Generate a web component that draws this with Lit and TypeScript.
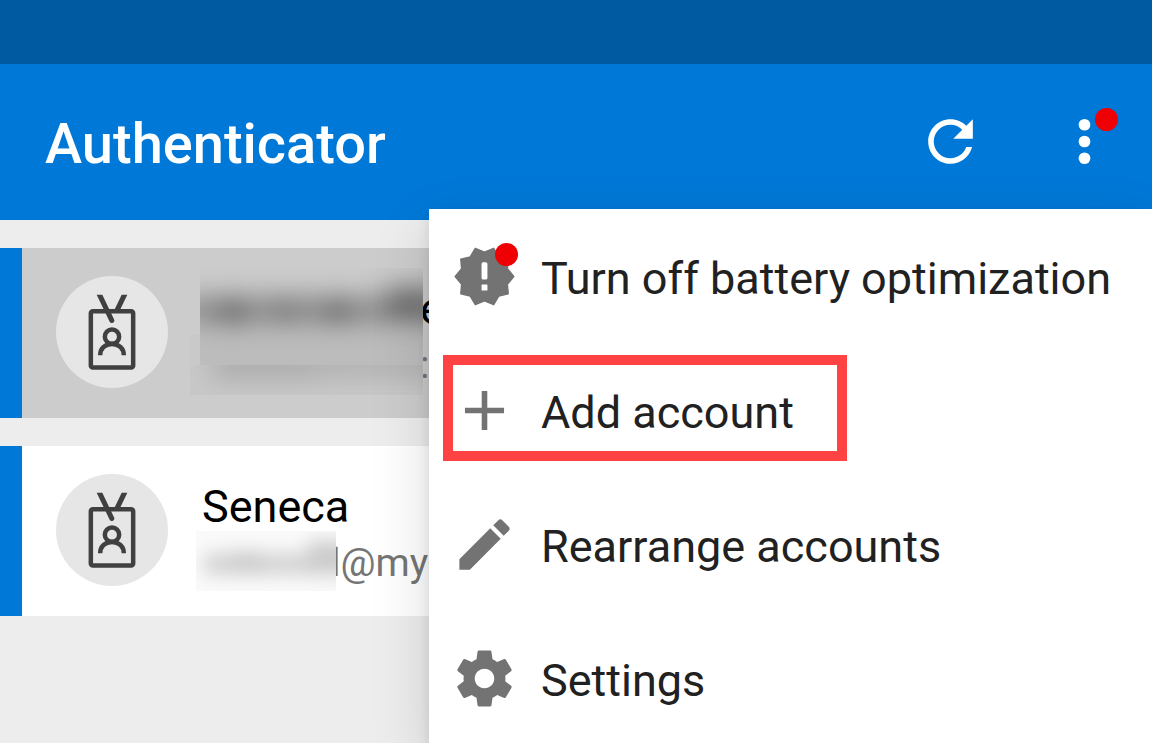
import { LitElement, html, css, svg } from "lit";
import { customElement, property } from "lit/decorators.js";
import { classMap } from "lit/directives/class-map.js";

const ICONS = {
  refresh: svg`<path d="M17.65 6.35C16.2 4.9 14.21 4 12 4c-4.42 0-7.99 3.58-7.99 8s3.57 8 7.99 8c3.73 0 6.84-2.55 7.73-6h-2.08c-.82 2.33-3.04 4-5.65 4-3.31 0-6-2.69-6-6s2.69-6 6-6c1.66 0 3.14.69 4.22 1.78L13 11h7V4l-2.35 2.35z"/>`,
  more: svg`<circle cx="12" cy="6" r="2.1"/><circle cx="12" cy="12" r="2.1"/><circle cx="12" cy="18" r="2.1"/>`,
  alert: svg`<path stroke="currentColor" stroke-width=".5" stroke-linejoin="round" d="M22.5 12l-2.3-2.8.3-3.4-3.4-.85L15.3 1.9 12 3.25 8.7 1.9 6.9 4.95l-3.4.85.3 3.4L1.5 12l2.3 2.8-.3 3.4 3.4.85L8.7 22.1 12 20.75l3.3 1.35 1.8-3.05 3.4-.85-.3-3.4z"/><rect x="10.95" y="6.9" width="2.1" height="6.2" rx=".6" fill="#fff"/><rect x="10.95" y="14.9" width="2.1" height="2.1" rx=".2" fill="#fff"/>`,
  plus: svg`<path d="M19 13h-6v6h-2v-6H5v-2h6V5h2v6h6v2z"/>`,
  pencil: svg`<path d="M3 17.25V21h3.75L17.81 9.94l-3.75-3.75L3 17.25zM20.71 7.04c.39-.39.39-1.02 0-1.41l-2.34-2.34c-.39-.39-1.02-.39-1.41 0l-1.83 1.83 3.75 3.75 1.83-1.83z"/>`,
  gear: svg`<path d="M19.43 12.98c.04-.32.07-.64.07-.98s-.03-.66-.07-.98l2.11-1.65c.19-.15.24-.42.12-.64l-2-3.46c-.12-.22-.39-.3-.61-.22l-2.49 1c-.52-.4-1.08-.73-1.69-.98l-.38-2.65C14.46 2.18 14.25 2 14 2h-4c-.25 0-.46.18-.49.42l-.38 2.65c-.61.25-1.17.59-1.69.98l-2.49-1c-.23-.09-.49 0-.61.22l-2 3.46c-.13.22-.07.49.12.64l2.11 1.65c-.04.32-.07.65-.07.98s.03.66.07.98l-2.11 1.65c-.19.15-.24.42-.12.64l2 3.46c.12.22.39.3.61.22l2.49-1c.52.4 1.08.73 1.69.98l.38 2.65c.03.24.24.42.49.42h4c.25 0 .46-.18.49-.42l.38-2.65c.61-.25 1.17-.59 1.69-.98l2.49 1c.23.09.49 0 .61-.22l2-3.46c.12-.22.07-.49-.12-.64l-2.11-1.65zM12 15.5c-1.93 0-3.5-1.57-3.5-3.5s1.57-3.5 3.5-3.5 3.5 1.57 3.5 3.5-1.57 3.5-3.5 3.5z"/>`,
};

type IconName = keyof typeof ICONS;

@customElement("app-icon")
class AppIcon extends LitElement {
  @property() name: IconName = "more";
  @property({ type: Boolean }) dot = false;

  static styles = css`
    :host {
      display: block;
      position: relative;
      flex: none;
      width: 67px;
      height: 67px;
    }
    .glyph {
      display: block;
      width: 100%;
      height: 100%;
      fill: currentColor;
    }
    .dot {
      position: absolute;
      top: 0;
      right: 0;
      width: 23px;
      height: 23px;
      border-radius: 50%;
      background: #ee0004;
    }
  `;

  render() {
    return html`
      <svg class="glyph" viewBox="0 0 24 24" aria-hidden="true">${ICONS[this.name]}</svg>
      ${this.dot ? html`<span class="dot"></span>` : null}
    `;
  }
}

@customElement("account-card")
class AccountCard extends LitElement {
  @property() name = "";
  @property() mail = "";
  @property({ type: Boolean }) selected = false;

  static styles = css`
    :host {
      display: block;
    }
    .card {
      display: flex;
      align-items: flex-start;
      box-sizing: border-box;
      min-height: 170px;
      padding: 28px 0 0 34px;
      border-left: 22px solid #0078d7;
      background: #fff;
      overflow: hidden;
    }
    .selected {
      background: #ccc;
    }
    .avatar {
      flex: none;
      width: 112px;
      height: 112px;
    }
    .text {
      padding: 5px 0 0 34px;
      line-height: 56px;
      white-space: nowrap;
    }
    .selected .text {
      padding-left: 0;
    }
    .selected .name,
    .selected .mail {
      margin-left: -3px;
    }
    .name {
      font-size: 45px;
      color: #000;
    }
    .mail {
      display: flex;
      font-size: 39px;
      color: #757575;
    }
    .smudge {
      position: relative;
      flex: none;
      width: 140px;
      height: 60px;
      margin: -4px -5px 0 -6px;
    }
    .smudge-large {
      position: relative;
      flex: none;
      width: 233px;
      height: 127px;
      margin: -8px 0 0 22px;
    }
  `;

  private largeSmudge() {
    return html`
      <svg class="smudge-large" viewBox="0 0 233 127" aria-hidden="true">
        <defs>
          <filter id="soft" x="-50%" y="-100%" width="200%" height="300%">
            <feGaussianBlur stdDeviation="13" />
          </filter>
          <clipPath id="upper"><rect x="10" width="223" height="97" /></clipPath>
          <clipPath id="lower"><rect y="97" width="233" height="30" /></clipPath>
        </defs>
        <rect x="10" width="223" height="97" fill="#cbcbcb" />
        <rect y="67" width="10" height="30" fill="#c9c9c9" />
        <rect y="97" width="233" height="30" fill="#c8c8c8" />
        <g clip-path="url(#upper)">
          <g filter="url(#soft)">
            <rect x="-10" y="28" width="280" height="30" fill="#8d8d8d" />
            <rect x="30" y="34" width="26" height="24" fill="#606060" />
            <rect x="84" y="34" width="24" height="20" fill="#707070" />
            <rect x="134" y="34" width="26" height="22" fill="#606060" />
            <rect x="196" y="20" width="50" height="34" fill="#6c6c6c" />
            <rect x="-10" y="64" width="280" height="50" fill="#bbb" />
          </g>
        </g>
        <g clip-path="url(#lower)">
          <g filter="url(#soft)">
            <rect x="22" y="84" width="108" height="26" fill="#a8a8a8" />
            <rect x="120" y="84" width="140" height="24" fill="#aeaeae" />
          </g>
        </g>
      </svg>
    `;
  }

  private smallSmudge() {
    return html`
      <svg class="smudge" viewBox="0 0 140 60" aria-hidden="true">
        <defs>
          <filter id="soft" x="-50%" y="-100%" width="200%" height="300%">
            <feGaussianBlur stdDeviation="9" />
          </filter>
          <clipPath id="box"><rect width="140" height="60" /></clipPath>
        </defs>
        <rect width="140" height="60" fill="#fafafa" />
        <g clip-path="url(#box)">
          <g filter="url(#soft)">
            <rect x="8" y="22" width="140" height="22" fill="#d3d3d3" />
            <rect x="36" y="20" width="30" height="22" fill="#ccc" />
            <rect x="112" y="10" width="44" height="34" fill="#ccc" />
          </g>
        </g>
      </svg>
    `;
  }

  render() {
    return html`
      <article class=${classMap({ card: true, selected: this.selected })}>
        <svg class="avatar" viewBox="0 0 336 336" aria-hidden="true">
          <circle cx="168" cy="168" r="168" fill="#e6e6e6" />
          <g fill="none" stroke="#404040" stroke-width="13.5">
            <rect x="104.500" y="105.500" width="127" height="169" rx="6" />
            <circle cx="168" cy="182" r="21.500" />
            <path d="M132.500 238c0-20 14-34 35.500-34s35.500 14 35.500 34" />
          </g>
          <path fill="#404040" d="M122 56h17l35 74a7 7 0 0 1-13 7zM197 56h17l-23 48h-17z" />
        </svg>
        ${this.selected ? this.largeSmudge() : null}
        <div class="text">
          <div class="name">${this.name}</div>
          <div class="mail">
            ${this.selected ? null : this.smallSmudge()}
            <span>${this.mail}</span>
          </div>
        </div>
      </article>
    `;
  }
}

interface MenuEntry {
  icon: IconName;
  label: string;
  dot?: boolean;
  marked?: boolean;
}

@customElement("app-root")
class AppRoot extends LitElement {
  static styles = css`
    :host {
      display: block;
      font-family: Roboto, "Liberation Sans", sans-serif;
    }
    .screen {
      position: relative;
      display: flex;
      flex-direction: column;
      height: 100vh;
      overflow: hidden;
      background: #ededed;
    }
    .status {
      flex: none;
      height: 64px;
      background: #005aa1;
    }
    .bar {
      display: flex;
      align-items: center;
      flex: none;
      gap: 67px;
      height: 156px;
      box-sizing: border-box;
      padding: 0 34px 2px 45px;
      background: #0078d7;
      color: #fff;
    }
    .title {
      flex: 1;
      margin: 0;
      padding-top: 6px;
      font-size: 56px;
      font-weight: 500;
      line-height: 64px;
    }
    button {
      margin: 0;
      padding: 0;
      border: 0;
      background: none;
      color: inherit;
      font: inherit;
      cursor: pointer;
    }
    .accounts {
      display: flex;
      flex-direction: column;
      gap: 28px;
      padding-top: 28px;
    }
    .menu {
      position: absolute;
      top: 209px;
      right: 0;
      width: 723px;
      max-width: 100%;
      background: #fff;
      box-shadow: 0 22px 56px rgba(0, 0, 0, 0.14), 0 6px 12px rgba(0, 0, 0, 0.1);
    }
    .entry {
      position: relative;
      display: flex;
      align-items: center;
      gap: 23px;
      width: 100%;
      height: 134px;
      padding: 0 22px;
      color: #737373;
      text-align: left;
    }
    .label {
      padding-top: 6px;
      color: #212121;
      font-size: 45px;
      line-height: 56px;
      white-space: nowrap;
    }
    .marked::after {
      content: "";
      position: absolute;
      top: 12px;
      left: 14px;
      width: 404px;
      height: 106px;
      box-sizing: border-box;
      border: 10px solid #ff4343;
    }
  `;

  private entries: MenuEntry[] = [
    { icon: "alert", label: "Turn off battery optimization", dot: true },
    { icon: "plus", label: "Add account", marked: true },
    { icon: "pencil", label: "Rearrange accounts" },
    { icon: "gear", label: "Settings" },
  ];

  render() {
    return html`
      <div class="screen">
        <div class="status"></div>
        <header class="bar">
          <h1 class="title">Authenticator</h1>
          <button aria-label="Refresh"><app-icon name="refresh"></app-icon></button>
          <button aria-label="More options"><app-icon name="more" dot></app-icon></button>
        </header>
        <main class="accounts">
          <account-card name="e" mail=":" selected></account-card>
          <account-card name="Seneca" mail="l@my"></account-card>
        </main>
        <nav class="menu">
          ${this.entries.map(
            (e) => html`
              <button class=${classMap({ entry: true, marked: !!e.marked })}>
                <app-icon name=${e.icon} ?dot=${!!e.dot}></app-icon>
                <span class="label">${e.label}</span>
              </button>
            `
          )}
        </nav>
      </div>
    `;
  }
}
